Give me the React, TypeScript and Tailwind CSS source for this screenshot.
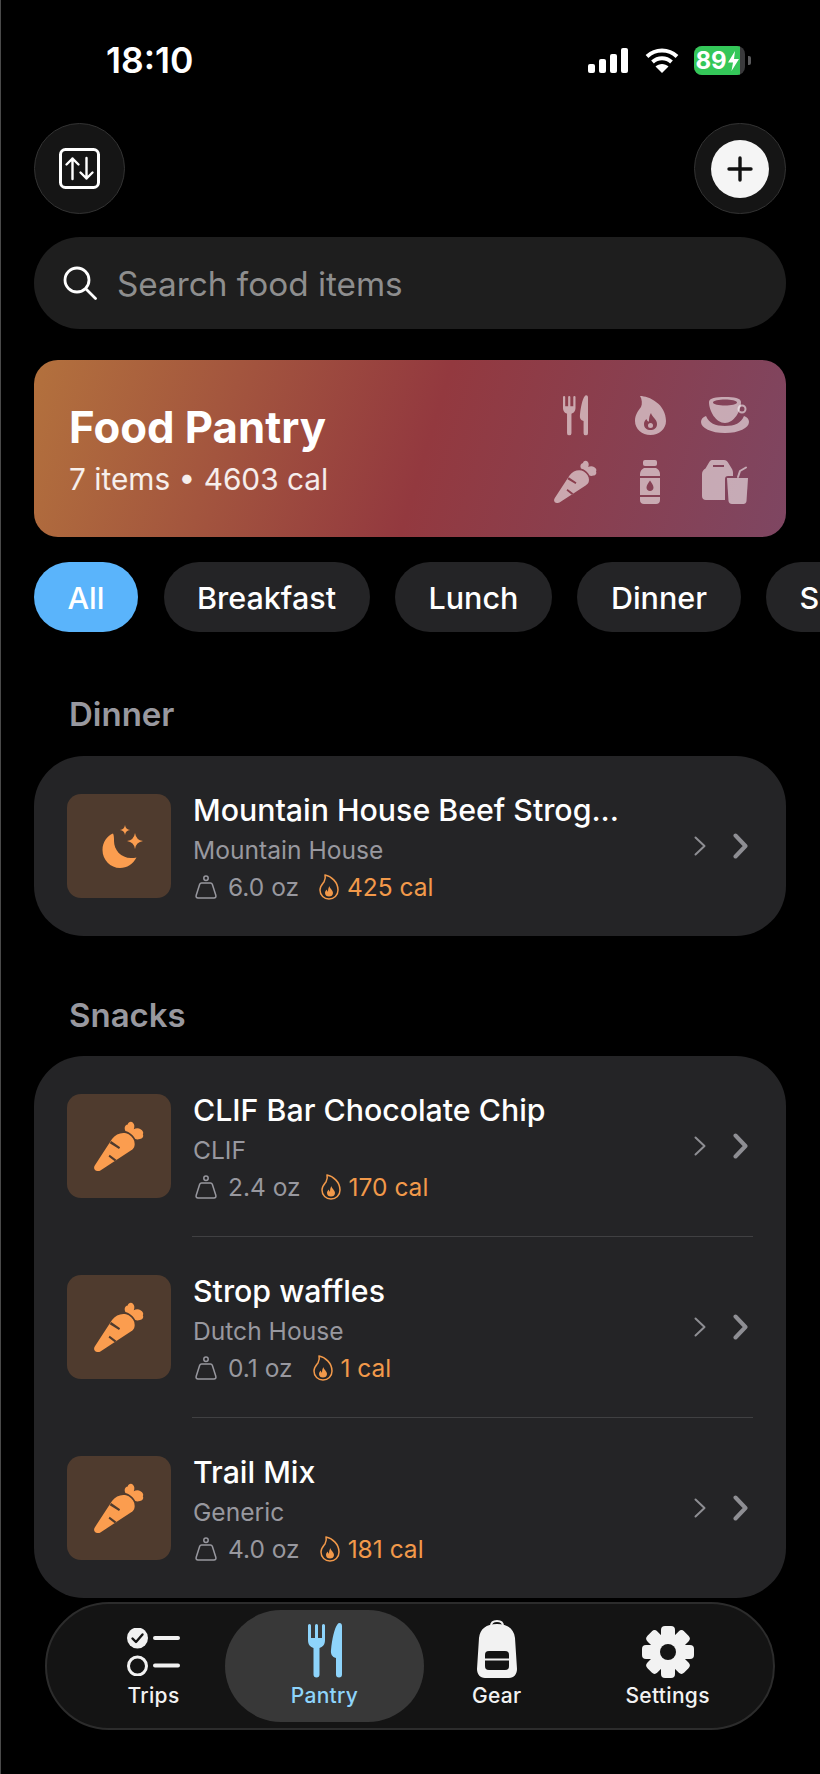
import { ReactNode } from 'react';

const ForkKnife = ({ className }: { className?: string }) => (
  <svg viewBox="0 0 34 55" className={className} fill="currentColor">
    <path d="M0 2.5A1.5 1.5 0 0 1 3 2.5V15H7V2.5A1.5 1.5 0 0 1 10 2.5V15H14V2.5A1.5 1.5 0 0 1 17 2.5V17C17 22 14.5 24 11.5 25V51.5A3 3 0 0 1 5.5 51.5V25C2.5 24 0 22 0 17Z" />
    <path d="M31.5 0C33 0 34 1 34 3V51.5A3 3 0 0 1 28 51.5V35C24 34 22.5 31 23 27C24 16 26.5 5 29.5 1.2C30 .5 30.7 0 31.5 0Z" />
  </svg>
);

const Carrot = ({ className }: { className?: string }) => (
  <svg viewBox="0 0 43 43" className={className} fill="currentColor">
    <path
      fillRule="evenodd"
      d="M.8 38 15.5 15.5C19 10.5 25.5 9 29.8 11.5C34 14 36 18.5 34.5 22.5C34 23.5 33 24.5 32 25.2L5.5 42.5C2 44.2-1.5 41.5.8 38ZM14.8 17.2 22.5 22.5 21.5 24 13.5 19.2ZM19.5 33.5 13.5 29 12.5 30.5 17.8 34.7Z"
    />
    <path d="M27 8.5C25.8 6 26.5 3.5 29 3C29.5 .8 32 0 33.5 1.5C35 3 35 5 34.2 7C36 6 38.5 6 40 7C42 8 43 10 42 11.5C43 13.5 41.5 15.5 39.5 15.5C38 16 36.5 16 35.5 15.5C34 12.5 31 9.5 27 8.5Z" />
  </svg>
);

const Flame = ({ className }: { className?: string }) => (
  <svg viewBox="0 0 31 39" className={className} fill="currentColor">
    <path
      fillRule="evenodd"
      d="M5 0C14 0 31 8 31 25C31 33 24 39 15.5 39C7 39 0 33 0 25C0 19 3 15 6 11C7.5 8 7 3 5 0ZM16 17C14.5 19 14 22 14 25.5C13 25.5 12 25 11.5 23C10 24 9 26 9 28C9 32 12 34 15.5 34C19 34 22 32 22 28C22 23 17 21 16 17Z"
    />
    <circle cx="15.5" cy="29.5" r="2.5" />
  </svg>
);

const Cup = ({ className }: { className?: string }) => (
  <svg viewBox="0 0 48 36" className={className} fill="currentColor">
    <path d="M5 19C8 26 14 29 24 29C34 29 40 26 43 19C46 20 48 22 48 25C48 31 38 36 24 36C10 36 0 31 0 25C0 22 2 20 5 19Z" />
    <path
      fillRule="evenodd"
      d="M8 5C8 1 15 0 24 0C33 0 40 1 40 5C40 14 33 26 24 26C15 26 8 14 8 5ZM12 5.5C12 7.5 18 8.5 24 8.5C30 8.5 36 7.5 36 5.5C36 3.5 30 2.5 24 2.5C18 2.5 12 3.5 12 5.5Z"
    />
    <circle cx="41" cy="12" r="3.5" fill="none" stroke="currentColor" strokeWidth="2" />
  </svg>
);

const Bottle = ({ className }: { className?: string }) => (
  <svg viewBox="0 0 20 44" className={className} fill="currentColor">
    <rect x="3" y="0" width="14" height="6" rx="2" />
    <path d="M4 8H16C18 9 20 11 20 14V16H0V14C0 11 2 9 4 8Z" />
    <path
      fillRule="evenodd"
      d="M0 18H20V35H0ZM10 20.5C8.5 23 6.5 25 6.5 27.5C6.5 29.5 8 31 10 31C12 31 13.5 29.5 13.5 27.5C13.5 25 11.5 23 10 20.5Z"
    />
    <path d="M0 37H20V40C20 42.5 18.5 44 16 44H4C1.5 44 0 42.5 0 40Z" />
  </svg>
);

const BagCup = ({ className }: { className?: string }) => (
  <svg viewBox="0 0 46 44" className={className} fill="currentColor">
    <path
      fillRule="evenodd"
      d="M10 0H22C24 0 25 1 26 2.5L30 9C30.5 10 31 11 31 13V16H26C24 16 23 17 23 19V40H4C1.5 40 0 38.5 0 36V14C0 11 2 9.5 3.5 8.5L7 2.5C8 1 8.5 0 10 0ZM11 5V7H22V5Z"
    />
    <path d="M25 18H46L44.5 41C44.3 43 43 44 41.5 44H30C28 44 26.8 43 26.5 41Z" />
    <path d="M36 17 38 11 44 7.5" fill="none" stroke="currentColor" strokeWidth="2" strokeLinecap="round" strokeLinejoin="round" />
  </svg>
);

const Moon = ({ className }: { className?: string }) => (
  <svg viewBox="0 0 41 43" className={className} fill="currentColor">
    <path d="M11 8.5C5 11 .5 17 .5 25C.5 35 8.5 43 18 43C25 43 31 39 34.5 32.5C33 33 31 33 29 33C19 33 12 25 12 16C12 13 12 10.5 11 8.5Z" />
    <path d="M23 0Q23.6 4.4 28 5Q23.6 5.6 23 10Q22.4 5.6 18 5Q22.4 4.4 23 0Z" />
    <path d="M33 8Q34 15 41 16Q34 17 33 24Q32 17 25 16Q32 15 33 8Z" />
  </svg>
);

const Weight = () => (
  <svg viewBox="0 0 22 24" className="h-[24px] w-[22px] shrink-0 text-[#98989f]" fill="none" stroke="currentColor" strokeWidth="1.5">
    <circle cx="11" cy="3.2" r="2.2" />
    <path d="M6.5 8H15.5C16.5 8 17 8.5 17.3 9.3L20.8 20.3C21.3 22 20.5 23 19 23H3C1.5 23 .7 22 1.2 20.3L4.7 9.3C5 8.5 5.5 8 6.5 8Z" strokeLinejoin="round" />
  </svg>
);

const SmallFlame = () => (
  <svg viewBox="0 0 20 26" className="h-[26px] w-[20px] shrink-0 text-[#f2994a]" fill="none" stroke="currentColor" strokeWidth="1.5">
    <path d="M6 1C12 2 19 8 19 16C19 21.5 15 25 10 25C5 25 1 21.5 1 16C1 12.5 3 10.5 5 8C6 6 6.8 3.5 6 1Z" strokeLinejoin="round" />
    <path d="M10.5 12C10.5 14.5 14 16 14 19C14 21.5 12.2 22.5 10 22.5C7.8 22.5 6 21.5 6 19C6 17.5 6.8 16.5 8 15.5C8 17 8.5 17.5 9 17.5C9 15.5 9.5 13.5 10.5 12Z" fill="currentColor" stroke="none" />
  </svg>
);

const Chevrons = () => (
  <div className="flex shrink-0 items-center gap-[27px] text-[#8e8e93]">
    <svg viewBox="0 0 12 20" className="h-[20px] w-[12px]" fill="none" stroke="currentColor" strokeWidth="2" strokeLinecap="round" strokeLinejoin="round">
      <path d="M1.5 1.5 10.5 10 1.5 18.5" />
    </svg>
    <svg viewBox="0 0 15 26" className="h-[26px] w-[15px]" fill="none" stroke="currentColor" strokeWidth="4" strokeLinecap="round" strokeLinejoin="round">
      <path d="M2.5 2.5 12.5 13 2.5 23.5" />
    </svg>
  </div>
);

const FoodRow = ({
  icon,
  name,
  brand,
  weight,
  cal,
}: {
  icon: ReactNode;
  name: string;
  brand: string;
  weight: string;
  cal: string;
}) => (
  <div className="flex h-[180px] items-center pl-[33px] pr-[38px]">
    <div className="flex h-[104px] w-[104px] shrink-0 items-center justify-center rounded-[14px] bg-[#4f3b2e] text-[#fb9d4f]">
      {icon}
    </div>
    <div className="ml-[22px] flex min-w-0 flex-1 flex-col pt-[2px]">
      <div className="text-[30.3px] font-medium leading-[42px] text-white">{name}</div>
      <div className="text-[24.6px] leading-[38px] text-[#98989f]">{brand}</div>
      <div className="flex items-center text-[24.5px] leading-[36px]">
        <span className="ml-[2px]">
          <Weight />
        </span>
        <span className="ml-[11px] text-[#98989f]">{weight}</span>
        <span className="ml-[20px]">
          <SmallFlame />
        </span>
        <span className="ml-[8px] text-[#f2994a]">{cal}</span>
      </div>
    </div>
    <Chevrons />
  </div>
);

const Separator = () => <div className="ml-[158px] mr-[33px] h-px bg-[#404042]" />;

const NavItem = ({
  icon,
  label,
  active,
}: {
  icon: ReactNode;
  label: string;
  active?: boolean;
}) => (
  <div
    className={
      active
        ? 'flex h-[112px] w-[199px] shrink-0 flex-col items-center justify-end rounded-[56px] bg-[#383838] pb-[13px] text-[#8ed4fb]'
        : 'flex h-[112px] shrink-0 flex-col items-center justify-end pb-[13px] text-[#f2f2f2]'
    }
  >
    {icon}
    <span className="mt-[5px] text-[21px] font-medium leading-[26px] tracking-[0.3px]">{label}</span>
  </div>
);

const pills = ['All', 'Breakfast', 'Lunch', 'Dinner', 'Snacks'];

const App = () => {
  return (
    <div className="flex h-[1774px] w-[820px] flex-col overflow-hidden bg-black font-['Inter',sans-serif] shadow-[inset_1px_0_0_#4a4a4a]">
      {/* status bar */}
      <div className="mt-[46px] flex h-[29px] items-center justify-between pl-[106px] pr-[69px]">
        <span className="text-[35.5px] font-semibold leading-none text-white">18:10</span>
        <div className="flex items-center">
          <svg viewBox="0 0 40 25" className="h-[25px] w-[40px]" fill="white">
            <rect x="0" y="16" width="7" height="9" rx="2" />
            <rect x="11" y="11" width="7" height="14" rx="2" />
            <rect x="22" y="6" width="7" height="19" rx="2" />
            <rect x="33" y="0" width="7" height="25" rx="2" />
          </svg>
          <svg viewBox="0 0 34 25" className="ml-[17px] h-[25px] w-[34px]" fill="none" stroke="white" strokeWidth="4">
            <path d="M2 8.5C10.5 .5 23.5 .5 32 8.5" />
            <path d="M7.5 14C13 9 21 9 26.5 14" />
            <path d="M17 25 10.5 18.5C14 15 20 15 23.5 18.5Z" fill="white" stroke="none" />
          </svg>
          <div className="relative ml-[15px] flex h-[29px] w-[51px] items-center overflow-hidden rounded-[8px] bg-[#3a3a3c]">
            <div className="flex h-full w-[46px] items-center justify-center gap-[1px] bg-[#34c759]">
              <span className="text-[24px] font-bold leading-none text-white">89</span>
              <svg viewBox="0 0 11 20" className="h-[20px] w-[11px]" fill="white">
                <path d="M7 0 0 11.5H5L3.5 20 11 8H6Z" />
              </svg>
            </div>
          </div>
          <div className="ml-[3px] h-[9px] w-[3px] rounded-r-[2px] bg-[#5a5a5c]" />
        </div>
      </div>

      {/* top buttons */}
      <div className="mt-[48px] flex items-center justify-between pl-[34px] pr-[34px]">
        <button className="flex h-[91px] w-[91px] items-center justify-center rounded-full border border-[#333333] bg-[#151515]">
          <svg viewBox="0 0 41 41" className="h-[41px] w-[41px]" fill="none" stroke="white" strokeWidth="3" strokeLinecap="round" strokeLinejoin="round">
            <rect x="1.5" y="1.5" width="38" height="38" rx="5" />
            <path d="M13.5 31V10.5M7.5 16.5l6-6 6 6" strokeWidth="2.4" />
            <path d="M27.5 10V30.5M21.5 24.5l6 6 6-6" strokeWidth="2.4" />
          </svg>
        </button>
        <button className="flex h-[91px] w-[92px] items-center justify-center rounded-full border border-[#333333] bg-[#151515]">
          <div className="flex h-[58px] w-[58px] items-center justify-center rounded-full bg-[#f5f5f5]">
            <svg viewBox="0 0 26 26" className="h-[26px] w-[26px]" fill="none" stroke="#111" strokeWidth="3.4" strokeLinecap="round">
              <path d="M13 2V24M2 13H24" />
            </svg>
          </div>
        </button>
      </div>

      {/* search */}
      <div className="mx-[34px] mt-[23px] flex h-[92px] items-center rounded-[46px] bg-[#1e1e1e] pl-[29px]">
        <svg viewBox="0 0 34 34" className="h-[34px] w-[34px]" fill="none" stroke="white" strokeWidth="2.8" strokeLinecap="round">
          <circle cx="14" cy="14" r="12" />
          <path d="M23 23 32.5 32.5" />
        </svg>
        <span className="ml-[20px] mt-[3px] text-[33.3px] text-[#8e8e8e]">Search food items</span>
      </div>

      {/* banner */}
      <div className="mx-[34px] mt-[31px] flex h-[177px] items-center justify-between rounded-[24px] bg-[linear-gradient(107deg,#b3713d_0%,#93393f_52%,#7e4662_100%)] pl-[35px] pr-[37px]">
        <div className="flex flex-col pt-[3px]">
          <span className="text-[43.7px] font-bold leading-[50px] text-white">Food Pantry</span>
          <span className="mt-[7px] text-[29.8px] leading-[38px] text-white/90">7 items • 4603 cal</span>
        </div>
        <div className="grid grid-cols-[48px_48px_48px] items-center justify-items-center gap-x-[27px] gap-y-[23px] text-white/55">
          <ForkKnife className="h-[43px] w-[25px]" />
          <Flame className="h-[39px] w-[31px]" />
          <Cup className="h-[36px] w-[48px]" />
          <Carrot className="h-[43px] w-[43px]" />
          <Bottle className="h-[44px] w-[20px]" />
          <BagCup className="h-[44px] w-[46px]" />
        </div>
      </div>

      {/* filter pills */}
      <div className="mt-[25px] flex gap-[25.5px] pl-[34px]">
        {pills.map((p, i) => (
          <div
            key={p}
            className={
              i === 0
                ? 'flex h-[70px] shrink-0 items-center rounded-[35px] bg-[#5ab4fb] px-[33.5px] pt-[2px] text-[30.5px] font-medium text-white'
                : 'flex h-[70px] shrink-0 items-center rounded-[35px] bg-[#242426] px-[33.5px] pt-[2px] text-[30.5px] font-medium text-white'
            }
          >
            {p}
          </div>
        ))}
      </div>

      {/* lists */}
      <div className="ml-[69px] mt-[62px] text-[33px] font-semibold leading-[40px] text-[#98989f]">Dinner</div>
      <div className="mx-[34px] mt-[22px] rounded-[50px] bg-[#242426]">
        <FoodRow
          icon={<Moon className="ml-[7px] h-[43px] w-[41px]" />}
          name="Mountain House Beef Strog..."
          brand="Mountain House"
          weight="6.0 oz"
          cal="425 cal"
        />
      </div>

      <div className="ml-[69px] mt-[59px] text-[33px] font-semibold leading-[40px] text-[#98989f]">Snacks</div>
      <div className="mx-[34px] mt-[21px] rounded-[50px] bg-[#242426]">
        <FoodRow
          icon={<Carrot className="h-[50px] w-[50px]" />}
          name="CLIF Bar Chocolate Chip"
          brand="CLIF"
          weight="2.4 oz"
          cal="170 cal"
        />
        <Separator />
        <FoodRow
          icon={<Carrot className="h-[50px] w-[50px]" />}
          name="Strop waffles"
          brand="Dutch House"
          weight="0.1 oz"
          cal="1 cal"
        />
        <Separator />
        <FoodRow
          icon={<Carrot className="h-[50px] w-[50px]" />}
          name="Trail Mix"
          brand="Generic"
          weight="4.0 oz"
          cal="181 cal"
        />
      </div>

      {/* tab bar */}
      <div className="relative mx-[45px] mt-[4px] flex h-[128px] items-center rounded-[64px] border-2 border-[#2c2c2c] bg-[#141414] pl-[80px]">
        <NavItem
          label="Trips"
          icon={
            <svg viewBox="0 0 53 48" className="mb-[2px] h-[48px] w-[53px]" fill="none">
              <circle cx="10.5" cy="10" r="10.5" fill="#f2f2f2" />
              <path d="M5.5 10.5 9 14 15.5 6.5" stroke="#141414" strokeWidth="2.4" strokeLinecap="round" strokeLinejoin="round" />
              <circle cx="10.5" cy="38" r="9" stroke="#f2f2f2" strokeWidth="3" />
              <path d="M28 10H51M28 37.5H51" stroke="#f2f2f2" strokeWidth="4" strokeLinecap="round" />
            </svg>
          }
        />
        <div className="ml-[45px]">
          <NavItem label="Pantry" active icon={<ForkKnife className="h-[55px] w-[34px]" />} />
        </div>
        <div className="ml-[48px]">
          <NavItem
            label="Gear"
            icon={
              <svg viewBox="0 0 40 58" className="h-[58px] w-[40px]" fill="currentColor">
                <path d="M14 6C14 2.5 16.5 1 20 1C23.5 1 26 2.5 26 6" fill="none" stroke="currentColor" strokeWidth="2" />
                <path
                  fillRule="evenodd"
                  d="M20 4C31 4 37 9 38 18L40 49C40 54 37 58 32 58H8C3 58 0 54 0 49L2 18C3 9 9 4 20 4ZM12 31C9 31 8 32.5 8 35V38.5H32V35C32 32.5 31 31 28 31ZM8 40.5V46C8 48.5 9 50 12 50H28C31 50 32 48.5 32 46V40.5Z"
                />
              </svg>
            }
          />
        </div>
        <div className="ml-[104px]">
          <NavItem
            label="Settings"
            icon={
              <svg viewBox="0 0 52 52" className="h-[52px] w-[52px]" fill="currentColor">
                <circle cx="26" cy="26" r="18" />
                <rect x="19" y="0" width="14" height="52" rx="4" />
                <rect x="19" y="0" width="14" height="52" rx="4" transform="rotate(45 26 26)" />
                <rect x="19" y="0" width="14" height="52" rx="4" transform="rotate(90 26 26)" />
                <rect x="19" y="0" width="14" height="52" rx="4" transform="rotate(135 26 26)" />
                <circle cx="26" cy="26" r="8" fill="#141414" />
              </svg>
            }
          />
        </div>
      </div>
    </div>
  );
};

export default App;
